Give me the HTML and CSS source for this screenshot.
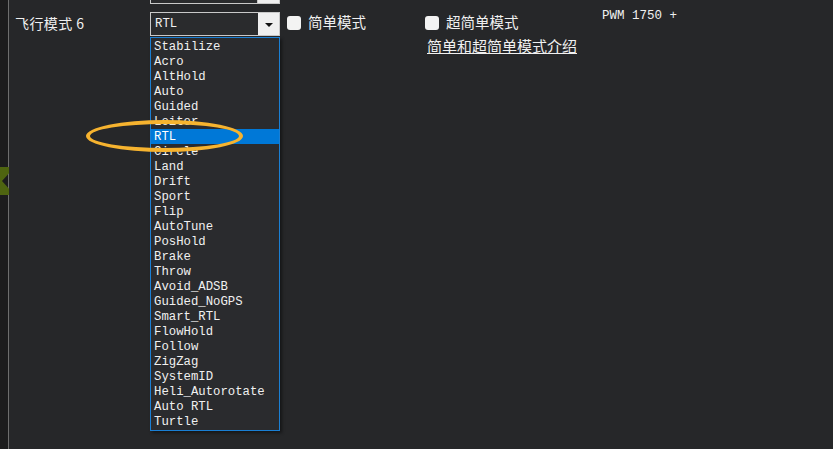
FILE: index.html
```html
<!DOCTYPE html>
<html lang="en">
<head>
    <meta charset="UTF-8">
    <title>飞行模式</title>
    <link rel="stylesheet" href="styles.css">
</head>
<body>
    <div class="frame">
        <div class="side">
            <div class="side-tab"></div>
        </div>
        <div class="main">
            <div class="prev-combo">
                <div class="combo-field"></div>
                <div class="combo-btn"></div>
            </div>

            <div class="mode-row">
                <div class="mode-label">飞行模式 6</div>
                <div class="combo-wrap">
                    <div class="combo">
                        <div class="combo-field">RTL</div>
                        <div class="combo-btn"><span class="arrow"></span></div>
                    </div>
                    <ul class="drop-list">
                        <li>Stabilize</li>
                        <li>Acro</li>
                        <li>AltHold</li>
                        <li>Auto</li>
                        <li>Guided</li>
                        <li>Loiter</li>
                        <li class="selected">RTL</li>
                        <li>Circle</li>
                        <li>Land</li>
                        <li>Drift</li>
                        <li>Sport</li>
                        <li>Flip</li>
                        <li>AutoTune</li>
                        <li>PosHold</li>
                        <li>Brake</li>
                        <li>Throw</li>
                        <li>Avoid_ADSB</li>
                        <li>Guided_NoGPS</li>
                        <li>Smart_RTL</li>
                        <li>FlowHold</li>
                        <li>Follow</li>
                        <li>ZigZag</li>
                        <li>SystemID</li>
                        <li>Heli_Autorotate</li>
                        <li>Auto RTL</li>
                        <li>Turtle</li>
                    </ul>
                </div>
                <label class="check check-simple"><span class="box"></span>简单模式</label>
                <label class="check check-super"><span class="box"></span>超简单模式</label>
                <div class="pwm">PWM 1750 +</div>
            </div>

            <div class="help-row">
                <a class="help-link" href="#">简单和超简单模式介绍</a>
            </div>
        </div>
    </div>
    <div class="callout"></div>
</body>
</html>
```

FILE: styles.css
```css
body {
    margin: 0;
    background: #262729;
    color: #f0f0f0;
    font-family: "Noto Sans CJK SC", "Noto Sans", sans-serif;
    width: 833px;
    height: 449px;
    overflow: hidden;
    position: relative;
}
.frame {
    display: flex;
    height: 449px;
}
.side {
    width: 8px;
    background: #1c1c1d;
    border-right: 1px solid #6e6e6e;
    padding-top: 167px;
}
.side-tab {
    height: 28px;
    width: 9px;
    background: #4e6410;
    clip-path: polygon(0 0, 100% 0, 100% 22%, 2px 50%, 100% 78%, 100% 100%, 0 100%);
}
.main {
    flex: 1;
    position: relative;
}
.prev-combo {
    display: flex;
    width: 130px;
    height: 5px;
    margin-left: 141px;
    margin-top: -1px;
}
.prev-combo .combo-field {
    flex: 1;
    border: 1px solid #c9c9c9;
    border-top: none;
    background: #2a2b2d;
}
.prev-combo .combo-btn {
    width: 21px;
    background: #efefef;
}
.mode-row {
    display: flex;
    align-items: center;
    margin-top: 8px;
    height: 24px;
}
.mode-label {
    width: 135px;
    padding-left: 6px;
    font-size: 14px;
    letter-spacing: 0.4px;
    line-height: 1;
    margin-top: -2px;
}
.combo-wrap {
    position: relative;
    width: 130px;
}
.combo {
    display: flex;
    height: 24px;
}
.combo-field {
    flex: 1;
    border: 1px solid #c9c9c9;
    border-right: none;
    background: #2a2b2d;
    font-family: "Liberation Mono", monospace;
    font-size: 12.3px;
    line-height: 22px;
    padding-left: 4px;
}
.combo-btn {
    width: 21px;
    background: #efefef;
    border: 1px solid #c9c9c9;
    border-left: none;
    display: flex;
    align-items: center;
    justify-content: center;
}
.arrow {
    border-left: 4px solid transparent;
    border-right: 4px solid transparent;
    border-top: 4px solid #111;
    margin-top: 1px;
}
.drop-list {
    position: absolute;
    top: 25px;
    left: 0;
    width: 128px;
    margin: 0;
    padding: 1px 0;
    list-style: none;
    background: #2a2b2e;
    border: 1px solid #1a7fd4;
    box-shadow: 2px 2px 3px rgba(0, 0, 0, 0.45);
    font-family: "Liberation Mono", monospace;
    font-size: 12.3px;
    z-index: 2;
}
.drop-list li {
    height: 14px;
    padding-top: 1px;
    line-height: 15px;
    padding-left: 3px;
    white-space: nowrap;
}
.drop-list li.selected {
    background: #0078d7;
    color: #fff;
}
.check {
    display: flex;
    align-items: center;
    font-size: 14.5px;
    line-height: 1;
}
.box {
    width: 14px;
    height: 14px;
    background: #f3f3f3;
    border-radius: 3px;
    margin-right: 7px;
    margin-top: 1px;
}
.check-simple {
    margin-left: 7px;
    width: 138px;
    margin-top: -4px;
}
.check-super {
    width: 177px;
    margin-top: -4px;
}
.pwm {
    align-self: flex-start;
    margin-top: -3px;
    font-family: "Liberation Mono", monospace;
    font-size: 12.5px;
}
.help-row {
    padding-left: 418px;
    margin-top: -3px;
}
.help-link {
    color: #f0f0f0;
    font-size: 15px;
    text-decoration: underline;
}
.callout {
    position: absolute;
    left: 86px;
    top: 120px;
    width: 149px;
    height: 24px;
    border: 4px solid #f6b32f;
    border-radius: 50%;
    z-index: 3;
}
```
